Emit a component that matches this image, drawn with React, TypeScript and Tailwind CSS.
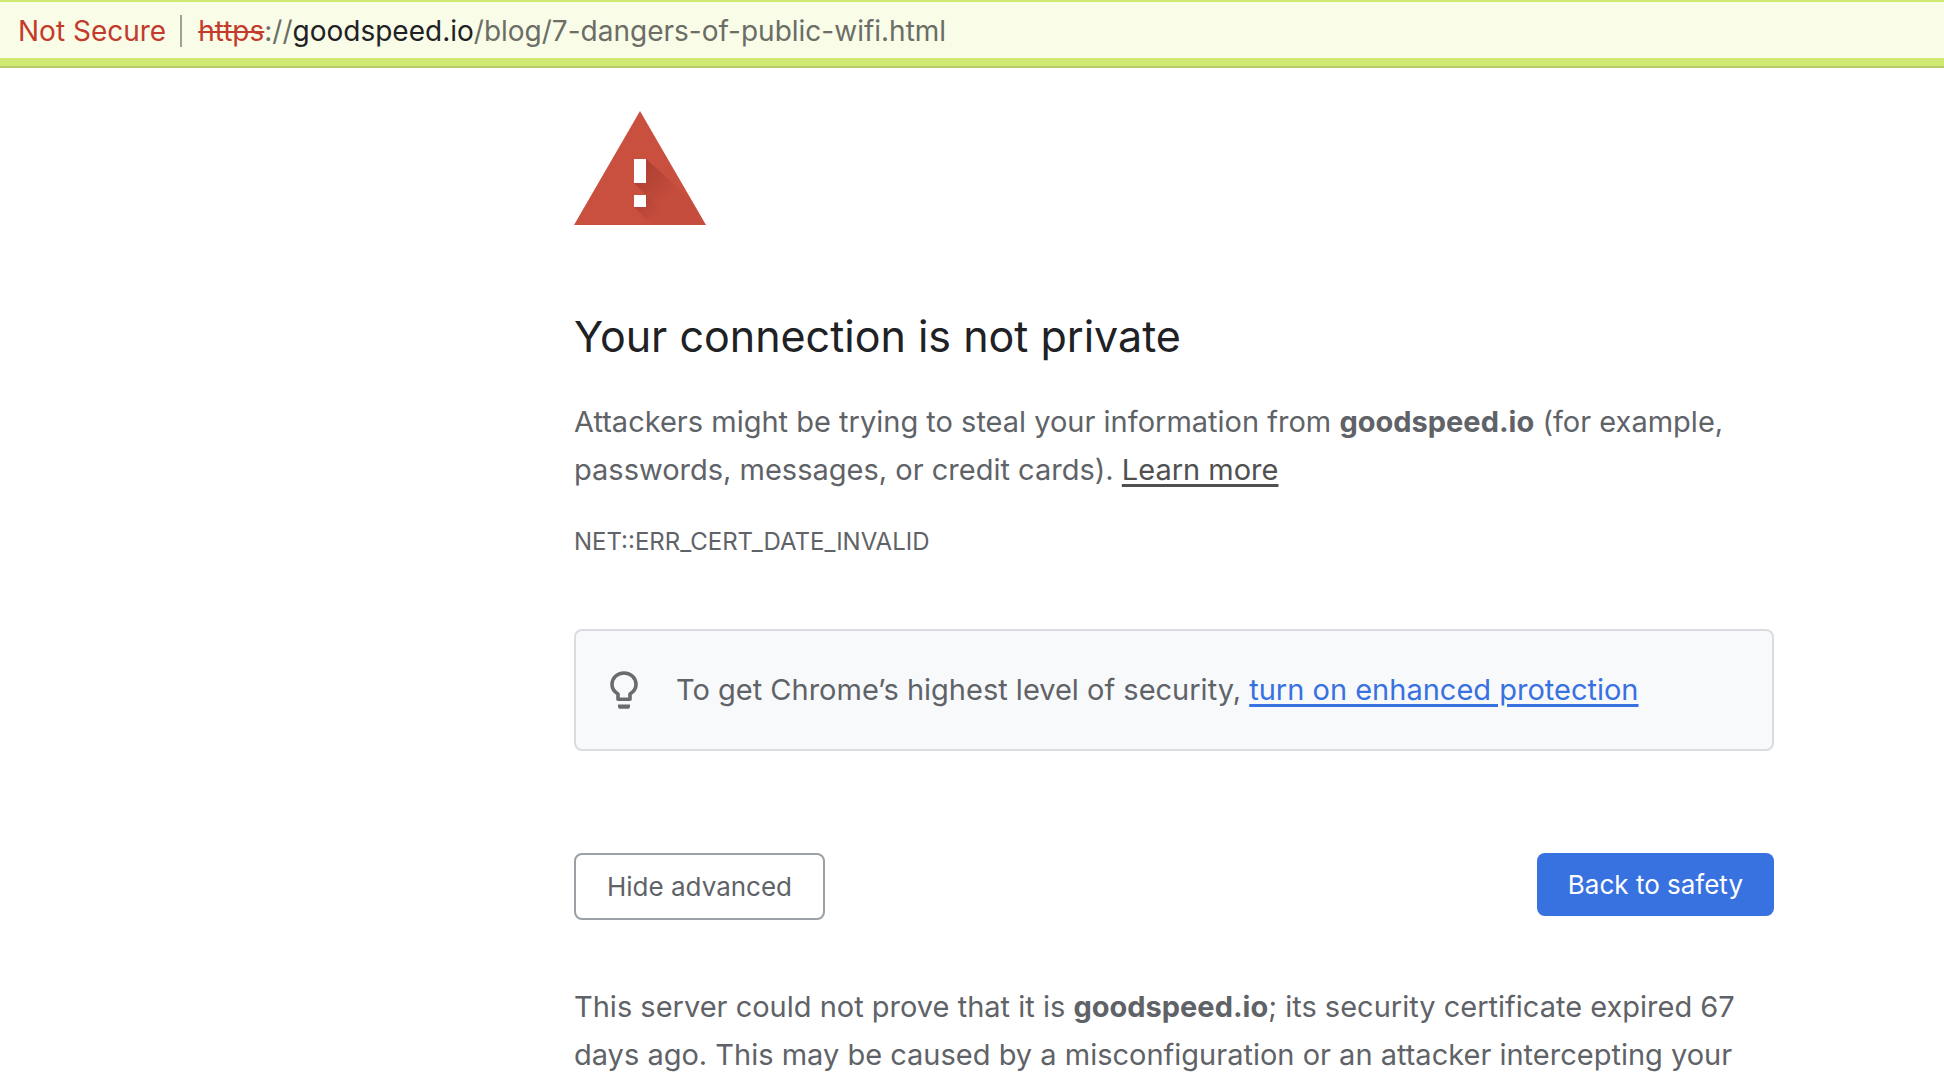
import type { ReactNode } from 'react'

const host = 'goodspeed.io'

function WarningIcon() {
  return (
    <svg viewBox="0 0 132 114" className="w-[132px] h-[114px]" role="img" aria-label="Warning">
      <defs>
        <linearGradient id="shade" gradientUnits="userSpaceOnUse" x1="66" y1="60" x2="94" y2="88">
          <stop offset="0" stopColor="#8c2f24" stopOpacity="0.45" />
          <stop offset="1" stopColor="#8c2f24" stopOpacity="0.06" />
        </linearGradient>
        <linearGradient id="shadeDot" gradientUnits="userSpaceOnUse" x1="62" y1="90" x2="80" y2="108">
          <stop offset="0" stopColor="#8c2f24" stopOpacity="0.4" />
          <stop offset="1" stopColor="#8c2f24" stopOpacity="0.06" />
        </linearGradient>
      </defs>
      <path d="M66 0 132 114H0z" fill="#c94f3f" />
      <path d="M72 48 117 88 132 114H102L60 72z" fill="url(#shade)" />
      <path d="M72 84 102 114H78L60 96z" fill="url(#shadeDot)" />
      <path d="M60 48h12v24H60zM60 84h12v12H60z" fill="#fff" />
    </svg>
  )
}

function BulbIcon() {
  return (
    <svg viewBox="0 0 28 38" className="w-7 h-[38px] shrink-0" fill="none" aria-hidden="true">
      <path
        d="M8 28.2V23C4.4 20.8 2 17.6 2 13.6 2 7 7.2 2 14 2s12 5 12 11.6c0 4-2.4 7.2-6 9.4v5.2z"
        stroke="#6b6b6b"
        strokeWidth="3.6"
        strokeLinejoin="round"
      />
      <path d="M8 33.6h12v1.6a2.6 2.6 0 0 1-2.6 2.6h-6.8A2.6 2.6 0 0 1 8 35.2z" fill="#6b6b6b" />
    </svg>
  )
}

function AddressBar() {
  return (
    <header className="h-[68px] flex items-center bg-[#f9fce7] border-t-2 border-b-2 border-t-[#d0e972] border-b-[#b7c76b] shadow-[inset_0_-8px_0_#d0e972] pl-[18px] pb-[6px] text-[28px] whitespace-nowrap">
      <span className="text-[#c23b2c]">Not Secure</span>
      <span className="w-[2px] h-8 bg-[#9fa196] ml-[14px] mr-4" />
      <span className="text-[#6b6d66]">
        <span className="text-[#c23b2c] line-through decoration-2">https</span>
        ://
        <span className="text-[#202124]">{host}</span>
        /blog/7-dangers-of-public-wifi.html
      </span>
    </header>
  )
}

function Body({ children }: { children: ReactNode }) {
  return <p className="text-[29px] leading-[48px]">{children}</p>
}

export default function App() {
  return (
    <div className="h-screen overflow-hidden bg-white font-['Inter',sans-serif] text-[#5f6368]">
      <AddressBar />

      <main className="ml-[574px] mr-[170px] max-w-[1200px] pt-[43px]">
        <WarningIcon />

        <h1 className="mt-[81px] mb-8 text-[43px] leading-[60px] text-[#202124]">
          Your connection is not private
        </h1>
        <Body>
          Attackers might be trying to steal your information from <strong>{host}</strong> (for example,
          passwords, messages, or credit cards).{' '}
          <a href="#learn-more" className="text-[#505050] underline decoration-[3px] underline-offset-4">
            Learn more
          </a>
        </Body>
        <p className="mt-8 text-2xl leading-8">NET::ERR_CERT_DATE_INVALID</p>

        {/* Enhanced protection hint */}
        <div className="mt-[71px] flex items-center rounded-lg border-2 border-[#dadce0] bg-[#f8f9fb] px-[34px] py-[35px] gap-[38px]">
          <BulbIcon />
          <Body>
            To get Chrome’s highest level of security,{' '}
            <a href="#enhanced-protection" className="text-[#3871e0] underline decoration-[3px] underline-offset-4">
              turn on enhanced protection
            </a>
          </Body>
        </div>

        <div className="mt-[102px] mb-[63px] flex items-start justify-between text-[26px] leading-[33px]">
          <button type="button" className="rounded-lg border-2 border-[#9aa0a6] px-[31px] py-[15px]">
            Hide advanced
          </button>
          <button type="button" className="rounded-lg bg-[#3871e0] px-[31px] py-[15px] text-white">
            Back to safety
          </button>
        </div>

        <Body>
          This server could not prove that it is <strong>{host}</strong>; its security certificate expired 67
          days ago. This may be caused by a misconfiguration or an attacker intercepting your
        </Body>
      </main>
    </div>
  )
}
